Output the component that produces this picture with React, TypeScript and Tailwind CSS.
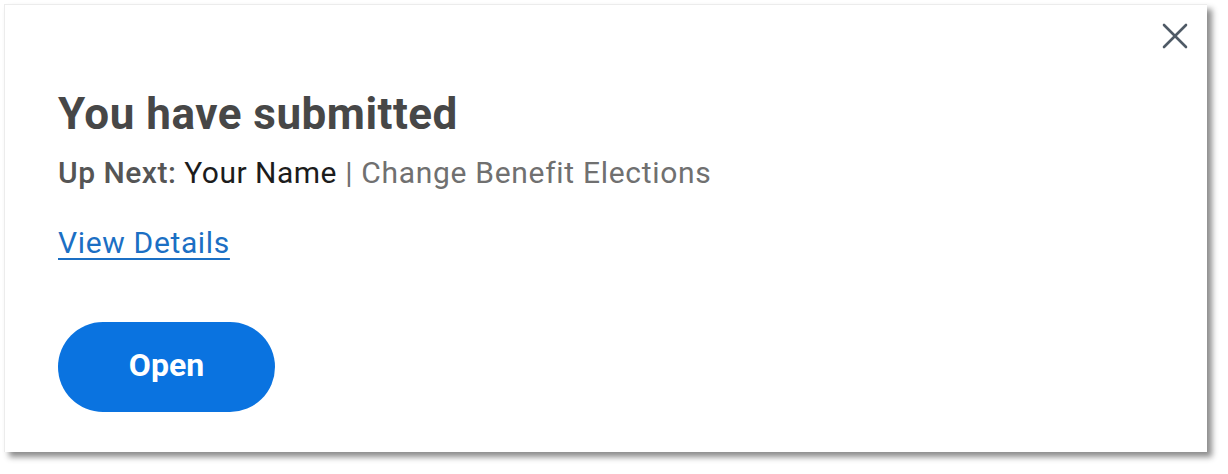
export default function App() {
  return (
    <div className="w-[1228px] h-[474px] bg-white pt-[4px] pl-[4px]" style={{ fontFamily: 'Roboto, "Noto Sans", Arial, sans-serif' }}>
      <div className="relative w-[1203px] h-[448px] bg-white border-l border-t border-[#ececec] shadow-[5px_5px_6px_rgba(0,0,0,0.45)] pl-[53px] pt-[84px]">
        {/* close */}
        <button className="absolute top-[18px] right-[19px] w-[26px] h-[26px] flex items-center justify-center text-[#4f5a66]">
          <svg width="26" height="26" viewBox="0 0 26 26" fill="none" stroke="currentColor" strokeWidth="2.6" strokeLinecap="round">
            <line x1="2" y1="2" x2="24" y2="24" />
            <line x1="24" y1="2" x2="2" y2="24" />
          </svg>
        </button>

        <h1 className="text-[44px] leading-[50px] font-bold tracking-[0.5px] text-[#474747]">You have submitted</h1>

        <p className="mt-[17px] text-[30px] leading-[34px] tracking-[0.5px] text-[#555555]">
          <span className="font-medium">Up Next: </span>
          <span className="text-[#1c1c1c]">Your Name</span>
          <span className="text-[#707070] tracking-[0.7px]"> | Change Benefit Elections</span>
        </p>

        <div className="mt-[36px]">
          <a href="#" className="text-[30px] leading-[34px] tracking-[0.65px] text-[#1b6fc4] underline underline-offset-[5px] decoration-[2px]">
            View Details
          </a>
        </div>

        <button className="mt-[62px] w-[217px] h-[90px] rounded-full bg-[#0a73e0] text-white text-[32px] font-bold pb-[4px]">
          Open
        </button>
      </div>
    </div>
  );
}
